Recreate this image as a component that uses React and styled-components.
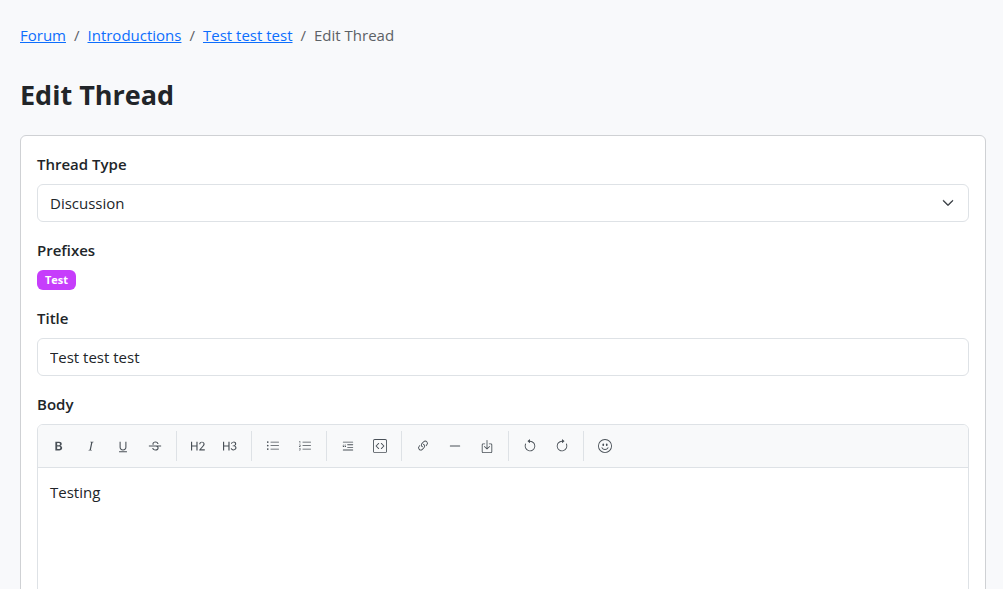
import React, { useState } from "react";
import styled, { createGlobalStyle } from "styled-components";
import {
  BsTypeBold,
  BsTypeItalic,
  BsTypeUnderline,
  BsTypeStrikethrough,
  BsTypeH2,
  BsTypeH3,
  BsListUl,
  BsListOl,
  BsBlockquoteLeft,
  BsCodeSquare,
  BsLink45Deg,
  BsDashLg,
  BsBoxArrowInDown,
  BsArrowCounterclockwise,
  BsArrowClockwise,
  BsEmojiSmile,
  BsChevronDown,
} from "react-icons/bs";

const GlobalStyle = createGlobalStyle`
  *, *::before, *::after {
    box-sizing: border-box;
  }

  body {
    margin: 0;
    background-color: #f8f9fb;
    color: #212529;
    font-family: "Segoe UI", "Open Sans", "Noto Sans", sans-serif;
    font-size: 15px;
    line-height: 24px;
  }

  button, input, select, textarea {
    font: inherit;
    color: inherit;
  }
`;

const Page = styled.main`
  padding: 23px 17px 24px 20px;
`;

const Breadcrumb = styled.ol`
  display: flex;
  flex-wrap: wrap;
  margin: 0 0 32px;
  padding: 0;
  list-style: none;
`;

const Crumb = styled.li`
  color: ${props => (props.$active ? "#5c6166" : "inherit")};

  &:not(:first-child)::before {
    content: "/";
    padding: 0 8px;
    color: #5c6166;
  }
`;

const CrumbLink = styled.a`
  color: #0d6efd;
  text-decoration: underline;
`;

const Heading = styled.h1`
  margin: 0 0 24px;
  font-size: 27px;
  font-weight: 700;
  line-height: 32px;
`;

const Card = styled.form`
  display: flex;
  flex-direction: column;
  gap: 16px;
  padding: 16px;
  background-color: #ffffff;
  border: 1px solid #cfd1d4;
  border-radius: 6px;
`;

const Field = styled.div`
  display: flex;
  flex-direction: column;
  gap: 8px;
`;

const Label = styled.label`
  font-weight: 600;
`;

const SelectWrapper = styled.div`
  position: relative;

  svg {
    position: absolute;
    top: 13px;
    right: 15px;
    width: 12px;
    height: 12px;
    stroke: #343a40;
    stroke-width: 1px;
    pointer-events: none;
  }
`;

const Select = styled.select`
  display: block;
  width: 100%;
  height: 38px;
  padding: 6px 36px 6px 12px;
  appearance: none;
  background-color: #ffffff;
  border: 1px solid #dee2e6;
  border-radius: 6px;
`;

const Input = styled.input`
  width: 100%;
  height: 38px;
  padding: 6px 12px;
  background-color: #ffffff;
  border: 1px solid #dee2e6;
  border-radius: 6px;
`;

const Badge = styled.span`
  align-self: flex-start;
  padding: 0 8px;
  background-color: #c63dfb;
  border-radius: 6px;
  color: #ffffff;
  font-size: 11px;
  font-weight: 700;
  line-height: 20px;
`;

const Editor = styled.div`
  background-color: #ffffff;
  border: 1px solid #dee2e6;
  border-radius: 6px;
  overflow: hidden;
`;

const Toolbar = styled.div`
  display: flex;
  flex-wrap: wrap;
  gap: 2px;
  padding: 6px;
  background-color: #f8f9fa;
  border-bottom: 1px solid #dee2e6;
`;

const ToolButton = styled.button`
  display: flex;
  align-items: center;
  justify-content: center;
  width: 30px;
  height: 30px;
  padding: 0;
  background-color: transparent;
  border: 0;
  border-radius: 4px;
  color: #495057;
  cursor: pointer;

  &:hover {
    background-color: #e9ecef;
  }

  svg {
    width: 14px;
    height: 14px;
  }
`;

const Separator = styled.span`
  width: 1px;
  margin: 0 4px;
  background-color: #dee2e6;
`;

const Content = styled.textarea`
  display: block;
  width: 100%;
  min-height: 240px;
  padding: 12px;
  border: 0;
  outline: none;
  resize: vertical;
`;

const groups = [
  [
    ["Bold", BsTypeBold],
    ["Italic", BsTypeItalic],
    ["Underline", BsTypeUnderline],
    ["Strikethrough", BsTypeStrikethrough],
  ],
  [
    ["Heading 2", BsTypeH2],
    ["Heading 3", BsTypeH3],
  ],
  [
    ["Bullet list", BsListUl],
    ["Numbered list", BsListOl],
  ],
  [
    ["Quote", BsBlockquoteLeft],
    ["Code block", BsCodeSquare],
  ],
  [
    ["Link", BsLink45Deg],
    ["Horizontal rule", BsDashLg],
    ["Insert", BsBoxArrowInDown],
  ],
  [
    ["Undo", BsArrowCounterclockwise],
    ["Redo", BsArrowClockwise],
  ],
  [["Emoji", BsEmojiSmile]],
];

const EditorToolbar = () => (
  <Toolbar role="toolbar" aria-label="Formatting">
    {groups.map((group, index) => (
      <React.Fragment key={index}>
        {index > 0 ? <Separator /> : null}
        {group.map(([name, Icon]) => (
          <ToolButton key={name} type="button" aria-label={name}>
            <Icon />
          </ToolButton>
        ))}
      </React.Fragment>
    ))}
  </Toolbar>
);

const App = () => {
  const [title, setTitle] = useState("Test test test");
  const [body, setBody] = useState("Testing");

  return (
    <>
      <GlobalStyle />
      <Page>
        <nav aria-label="Breadcrumb">
          <Breadcrumb>
            <Crumb><CrumbLink href="#forum">Forum</CrumbLink></Crumb>
            <Crumb><CrumbLink href="#introductions">Introductions</CrumbLink></Crumb>
            <Crumb><CrumbLink href="#thread">Test test test</CrumbLink></Crumb>
            <Crumb $active aria-current="page">Edit Thread</Crumb>
          </Breadcrumb>
        </nav>
        <Heading>Edit Thread</Heading>
        <Card>
          <Field>
            <Label htmlFor="type">Thread Type</Label>
            <SelectWrapper>
              <Select id="type" defaultValue="discussion">
                <option value="discussion">Discussion</option>
              </Select>
              <BsChevronDown />
            </SelectWrapper>
          </Field>
          <Field role="group" aria-labelledby="prefixes">
            <Label as="span" id="prefixes">Prefixes</Label>
            <Badge>Test</Badge>
          </Field>
          <Field>
            <Label htmlFor="title">Title</Label>
            <Input id="title" type="text" value={title} onChange={e => setTitle(e.target.value)} />
          </Field>
          <Field>
            <Label htmlFor="body">Body</Label>
            <Editor>
              <EditorToolbar />
              <Content id="body" value={body} onChange={e => setBody(e.target.value)} />
            </Editor>
          </Field>
        </Card>
      </Page>
    </>
  );
};

export default App;
